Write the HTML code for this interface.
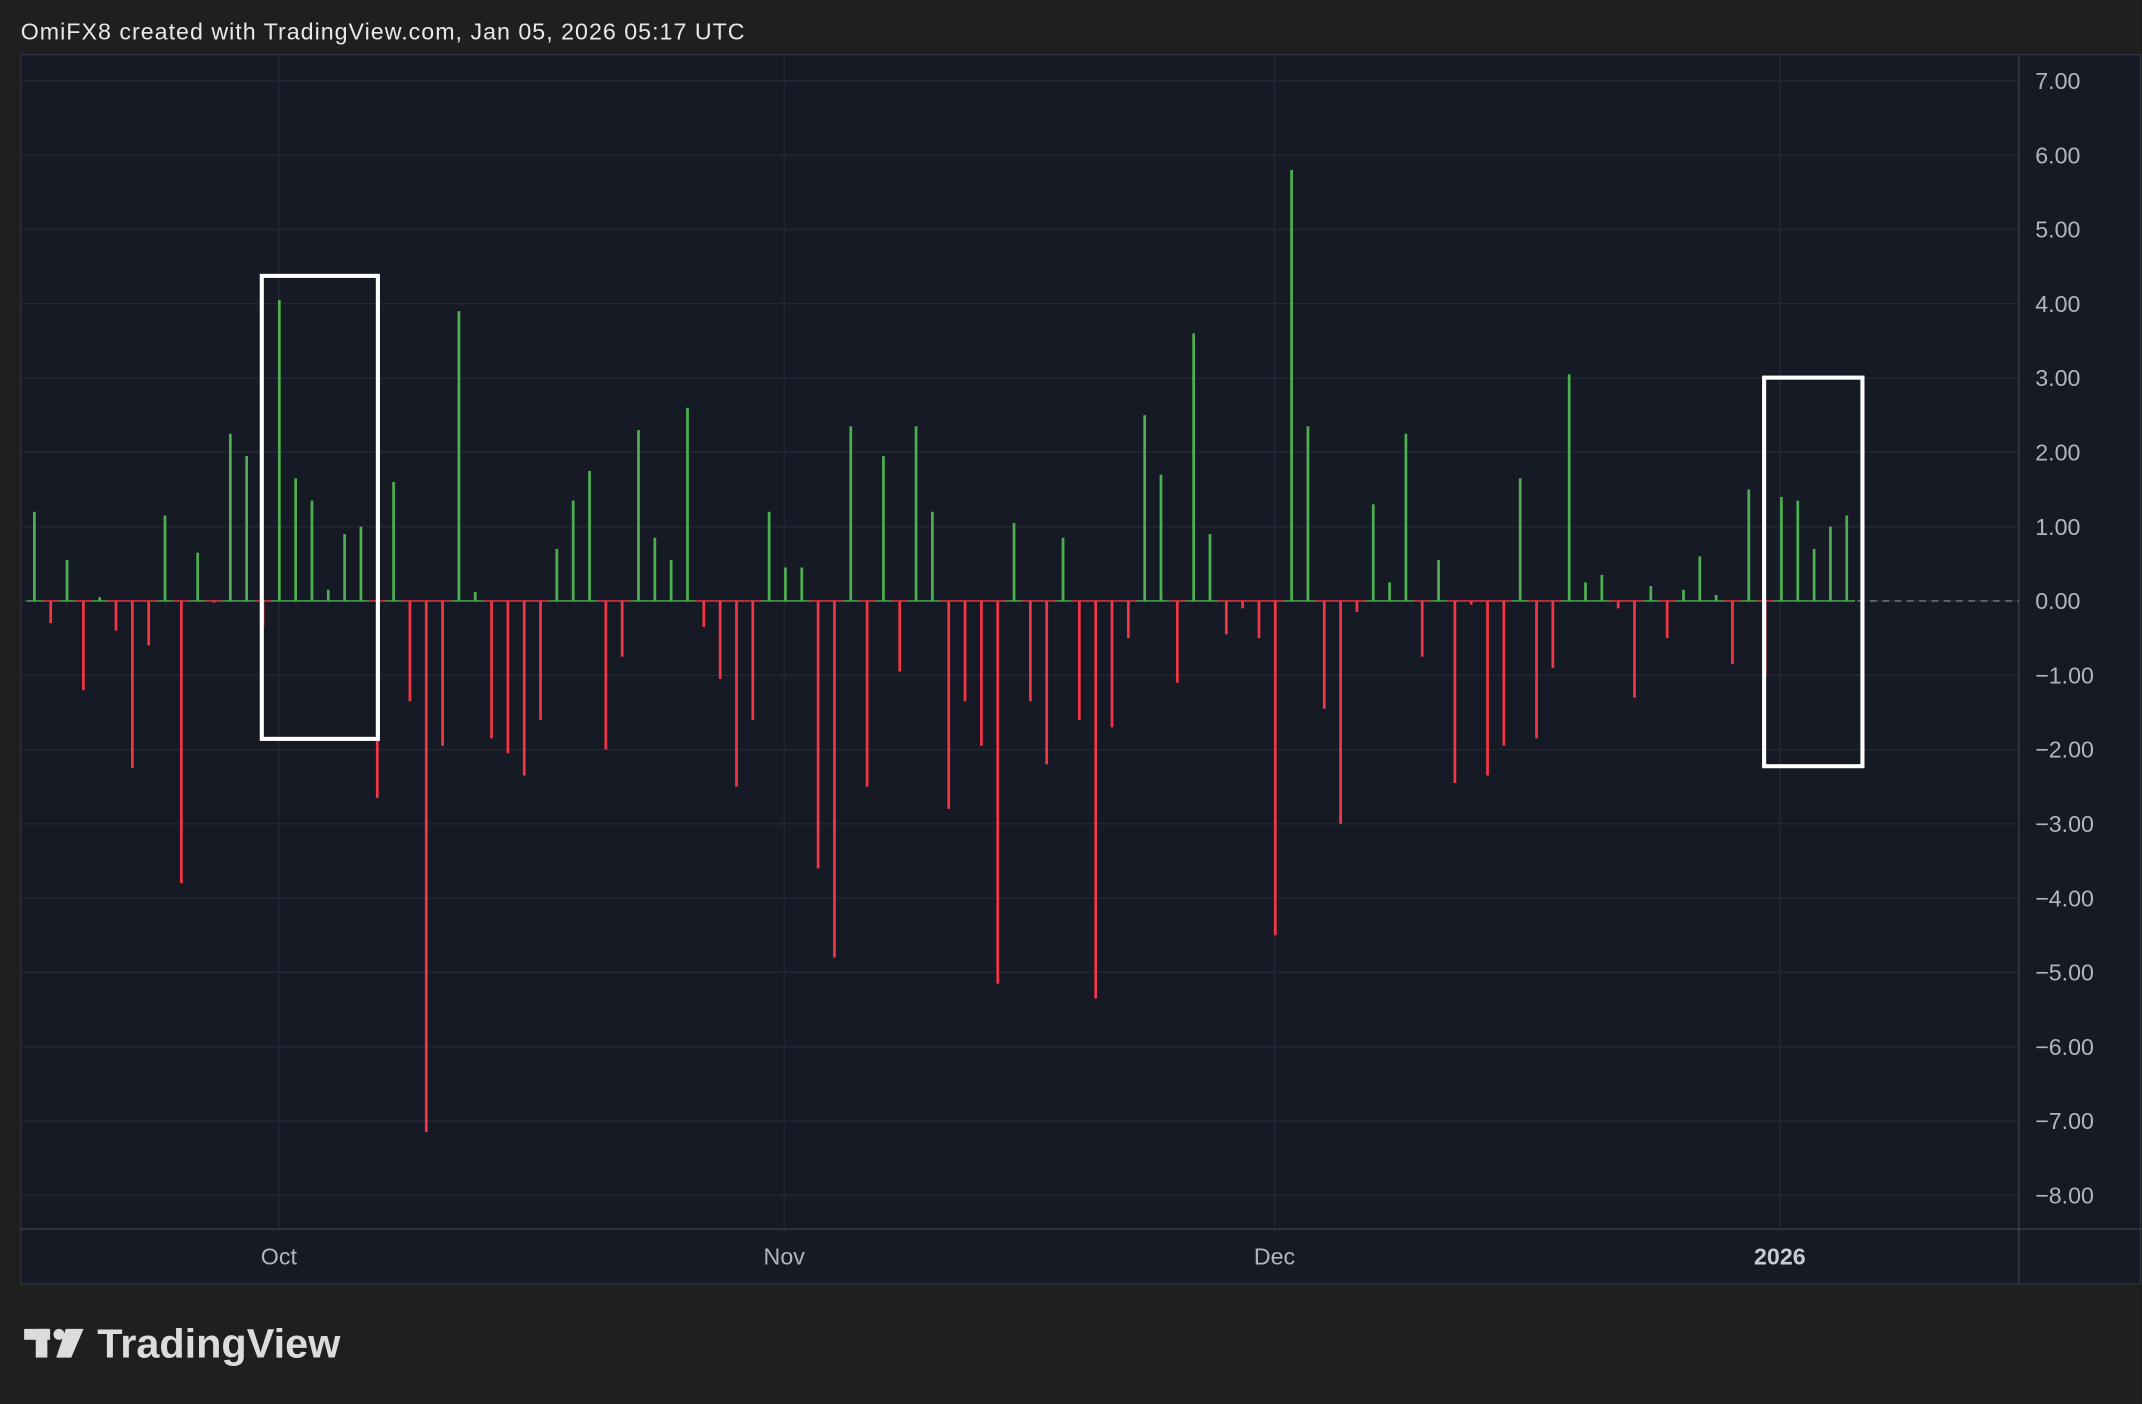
<!DOCTYPE html>
<html><head><meta charset="utf-8"><style>
html,body{margin:0;padding:0;background:#1f1f1f;width:2142px;height:1404px;overflow:hidden}
svg{display:block}
</style></head><body>
<svg id="s" width="2142" height="1404" viewBox="0 0 1568 1028" xmlns="http://www.w3.org/2000/svg" font-family="Liberation Sans, sans-serif">
<rect width="1568" height="1028" fill="#1f1f1f"/>
<text x="15" y="29" font-size="17" fill="#e8e8e8" textLength="530" lengthAdjust="spacing">OmiFX8 created with TradingView.com, Jan 05, 2026 05:17 UTC</text>
<rect x="15" y="40" width="1552" height="900" fill="#161a25" stroke="#2e323d" stroke-width="1"/>
<g id="grid" stroke="#242834" stroke-width="1"></g>
<line x1="15" y1="900" x2="1568" y2="900" stroke="#3a3e49"/>
<line x1="1478" y1="40" x2="1478" y2="940" stroke="#3a3e49"/>
<g id="labels" font-size="17" fill="#b2b5be"></g>
<g font-size="17" fill="#b2b5be" text-anchor="middle">
<text x="204" y="926">Oct</text><text x="574" y="926">Nov</text><text x="933" y="926">Dec</text>
<text x="1303" y="926" font-weight="bold" fill="#c8cad1">2026</text></g>
<line x1="1360" y1="440" x2="1478" y2="440" stroke="#787b86" stroke-dasharray="5,4" stroke-width="1"/>
<g id="bars"></g>
<rect x="191.5" y="202" width="85" height="339" fill="none" stroke="#fff" stroke-width="3"/>
<rect x="1291.5" y="276.5" width="72" height="284.5" fill="none" stroke="#fff" stroke-width="3"/>
<g fill="#dcdcdc">
<rect x="17.5" y="973" width="19" height="8"/><rect x="26" y="973" width="8.5" height="21"/>
<circle cx="43" cy="977" r="4"/>
<polygon points="48,973 61,973 52,994 41,994"/>
</g>
<text x="71" y="994" font-size="30" font-weight="bold" fill="#dcdcdc" textLength="178" lengthAdjust="spacingAndGlyphs">TradingView</text>
</svg>
<script>
var ns="http://www.w3.org/2000/svg",s=document.getElementById('s');
function el(p,t,a){var e=document.createElementNS(ns,t);for(var k in a)e.setAttribute(k,a[k]);document.getElementById(p).appendChild(e);return e;}
for(var v=7;v>=-8;v--){var y=440-v*54.4;el('grid','line',{x1:15,x2:1478,y1:y,y2:y});
var t=el('labels','text',{x:1490,y:y+6});t.textContent=(v<0?'\u2212':'')+Math.abs(v).toFixed(2);}
[204,574,933,1303].forEach(function(x){el('grid','line',{x1:x,x2:x,y1:40,y2:900});});
var vals=[1.2,-0.3,0.55,-1.2,0.05,-0.4,-2.25,-0.6,1.15,-3.8,0.65,-0.02,2.25,1.95,-0.35,4.05,1.65,1.35,0.15,0.9,1.0,-2.65,1.6,-1.35,-7.15,-1.95,3.9,0.12,-1.85,-2.05,-2.35,-1.6,0.7,1.35,1.75,-2.0,-0.75,2.3,0.85,0.55,2.6,-0.35,-1.05,-2.5,-1.6,1.2,0.45,0.45,-3.6,-4.8,2.35,-2.5,1.95,-0.95,2.35,1.2,-2.8,-1.35,-1.95,-5.15,1.05,-1.35,-2.2,0.85,-1.6,-5.35,-1.7,-0.5,2.5,1.7,-1.1,3.6,0.9,-0.45,-0.1,-0.5,-4.5,5.8,2.35,-1.45,-3.0,-0.15,1.3,0.25,2.25,-0.75,0.55,-2.45,-0.05,-2.35,-1.95,1.65,-1.85,-0.9,3.05,0.25,0.35,-0.1,-1.3,0.2,-0.5,0.15,0.6,0.08,-0.85,1.5,-1.0,1.4,1.35,0.7,1.0,1.15];
var n=vals.length,x0=25,x1=1352;
vals.forEach(function(v,i){var x=x0+i*(x1-x0)/(n-1);var h=Math.abs(v)*54.4;
el('bars','rect',{x:x-1,y:v>=0?440-h:440,width:2,height:Math.max(h,1),fill:v>=0?'#4caf50':'#f23645'});
el('bars','rect',{x:x-6,y:439.5,width:12,height:1,fill:v>=0?'#4caf50':'#f23645'});});
</script>
</body></html>
